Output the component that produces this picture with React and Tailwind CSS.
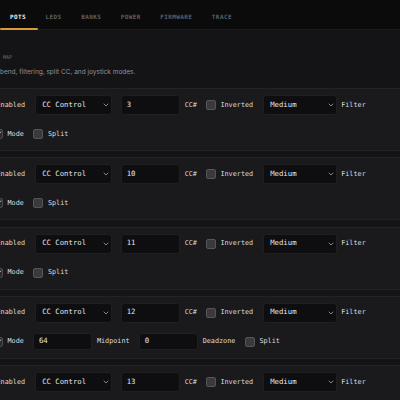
import { Check, ChevronDown } from "lucide-react";
import clsx from "clsx";

const TABS = ["Pots", "LEDs", "Banks", "Power", "Firmware", "Trace"];

const POTS = [
  { cc: 3 },
  { cc: 10 },
  { cc: 11 },
  { cc: 12, joystick: { mid: 64, dead: 0 } },
  { cc: 13 },
];

function Box({ checked }) {
  return (
    <span
      className={clsx(
        "flex h-[10px] w-[10px] shrink-0 items-center justify-center rounded-[2px] border",
        checked
          ? "border-[#4c4c50] bg-[#2a2a2d]"
          : "border-[#55555a] bg-[#3a3a3d]"
      )}
    >
      {checked && (
        <Check size={8} strokeWidth={3} className="text-[#e8e8ea]" />
      )}
    </span>
  );
}

function Label({ children }) {
  return (
    <span className="whitespace-nowrap text-[6.8px] leading-none text-[#dcdcdf]">
      {children}
    </span>
  );
}

function Select({ value, width }) {
  return (
    <div
      className={clsx(
        "flex h-[20px] shrink-0 items-center justify-between rounded-[3px] border border-[#1f1f22] bg-[#0e0e10] pl-[6.5px] pr-[1px] text-[7.3px] text-[#e6e6e8]",
        width
      )}
    >
      <span>{value}</span>
      <ChevronDown size={8} strokeWidth={2.5} className="text-[#9c9ca0]" />
    </div>
  );
}

function Field({ value, tall }) {
  return (
    <div
      className={clsx(
        "flex w-[59px] shrink-0 items-center rounded-[3px] border border-[#1f1f22] bg-[#0e0e10] pl-[4.5px] text-[7.3px] text-[#e6e6e8]",
        tall ? "h-[20px]" : "h-[17px]"
      )}
    >
      {value}
    </div>
  );
}

function PotCard({ pot }) {
  return (
    <div className="flex w-[460px] flex-col gap-[9px] rounded-[4px] border border-[#232326] bg-[#1a1a1c] px-[10px] py-[6px]">
      {/* main mapping row */}
      <div className="flex h-[20px] items-center gap-[9.5px]">
        <div className="flex items-center gap-[4.5px]">
          <Box checked />
          <Label>Enabled</Label>
        </div>
        <Select value="CC Control" width="w-[77px]" />
        <div className="flex items-center gap-[4.5px]">
          <Field value={pot.cc} tall />
          <Label>CC#</Label>
        </div>
        <div className="flex items-center gap-[4px]">
          <Box />
          <Label>Inverted</Label>
        </div>
        <div className="flex items-center gap-[4.5px]">
          <Select value="Medium" width="w-[74px]" />
          <Label>Filter</Label>
        </div>
      </div>

      {/* mode / split row */}
      <div className="flex h-[20px] items-center gap-[9.5px] pl-[11px]">
        <div className="flex items-center gap-[4.5px]">
          <Box checked />
          <Label>Mode</Label>
        </div>
        {pot.joystick && (
          <>
            <div className="flex items-center gap-[4.5px]">
              <Field value={pot.joystick.mid} />
              <Label>Midpoint</Label>
            </div>
            <div className="flex items-center gap-[4.5px]">
              <Field value={pot.joystick.dead} />
              <Label>Deadzone</Label>
            </div>
          </>
        )}
        <div className="flex items-center gap-[4.5px]">
          <Box />
          <Label>Split</Label>
        </div>
      </div>
    </div>
  );
}

export default function App() {
  return (
    <div className="h-[400px] w-[400px] overflow-hidden bg-[#141416] font-['DejaVu_Sans_Mono',monospace]">
      {/* Tabs */}
      <nav className="flex h-[30px] items-stretch gap-[19.5px] border-b border-[#1c1c1f] bg-[#0b0b0c] pl-[10px]">
        {TABS.map((t, i) => (
          <button
            key={t}
            className={clsx(
              "relative flex items-center pt-[4px] text-[6px] font-bold uppercase tracking-[0.4px]",
              i === 0 ? "text-[#f4f4f4]" : "text-[#5f5f64]"
            )}
          >
            {t}
            {i === 0 && (
              <span className="absolute bottom-[-1px] -left-[10px] -right-[12px] h-[2px] rounded-full bg-[#d99a3a]" />
            )}
          </button>
        ))}
      </nav>

      <section className="pt-[24px]">
        <p className="h-[6px] pl-[3px] text-[5px] uppercase leading-[6px] text-[#6c6c70]">
          <span className="-ml-[30px] inline-block w-[30px] whitespace-pre text-right">
            Pot{" "}
          </span>
          Map
        </p>
        <p className="mt-[7.5px] h-[9px] whitespace-nowrap font-['Inter',sans-serif] text-[6.5px] leading-[9px] text-[#929297]">
          <span className="-ml-[200px] inline-block w-[200px] whitespace-pre text-right">
            Per-pot CC mapping, pitch{" "}
          </span>
          bend, filtering, split CC, and joystick modes.
        </p>

        <div className="-ml-[29px] mt-[11.5px] flex flex-col gap-[6.25px]">
          {POTS.map((p) => (
            <PotCard key={p.cc} pot={p} />
          ))}
        </div>
      </section>
    </div>
  );
}
